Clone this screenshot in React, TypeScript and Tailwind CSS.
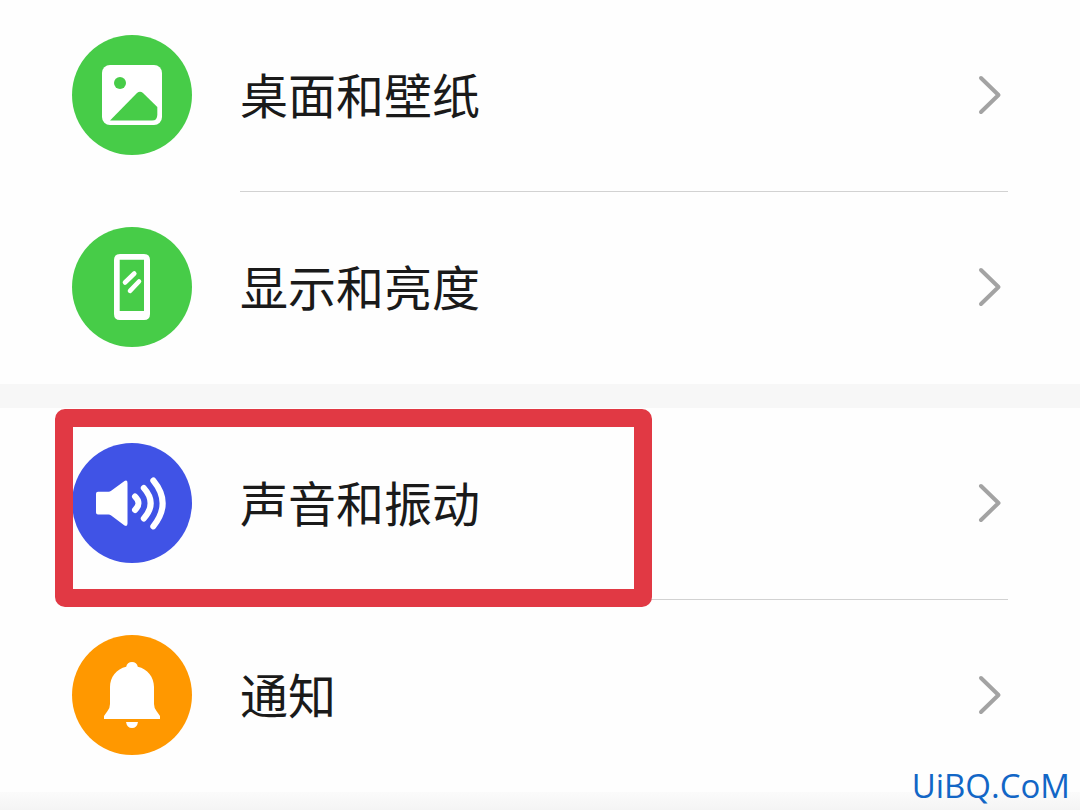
import type { ReactNode } from "react";

function WallpaperIcon() {
  return (
    <svg viewBox="0 0 120 120" className="w-full h-full" aria-hidden="true">
      <rect x="30" y="30" width="60" height="60" rx="8" fill="#fff" />
      <circle cx="48" cy="48" r="6" fill="#47cc48" />
      <path d="M38 85.5 L65 58 Q68 55.300 71 58 L85.300 72 V80 Q85.300 85.500 80 85.500 Z" fill="#47cc48" />
    </svg>
  );
}

function DisplayIcon() {
  return (
    <svg viewBox="0 0 120 120" className="w-full h-full" aria-hidden="true">
      <path
        fillRule="evenodd"
        d="M48 27 H72 Q78 27 78 33 V87 Q78 93 72 93 H48 Q42 93 42 87 V33 Q42 27 48 27 Z M47.700 32.700 V84 H72 V32.700 Z"
        fill="#fff"
      />
      <path d="M53 55.500 L62.300 46.500 M58 63.800 L67 54.500" stroke="#fff" strokeWidth="4.600" strokeLinecap="round" />
    </svg>
  );
}

function SoundIcon() {
  return (
    <svg viewBox="0 0 120 120" className="w-full h-full" aria-hidden="true">
      <path
        d="M26 48.700 H36.500 Q38 48.700 39.200 47.700 L52.500 38 Q55.500 36.600 55.500 40 V80.500 Q55.500 84 52.500 82.500 L39.200 72.500 Q38 71.400 36.500 71.400 H26 Q24 71.400 24 69.400 V50.700 Q24 48.700 26 48.700 Z"
        fill="#fff"
      />
      <g fill="none" stroke="#fff" strokeWidth="6" strokeLinecap="round">
        <path d="M63 53.500 Q70 60.200 63 67" />
        <path d="M71.800 45 Q85.500 60.200 71.800 75.500" />
        <path d="M81.300 37.500 Q100 60.200 81.300 83.300" />
      </g>
    </svg>
  );
}

function BellIcon() {
  return (
    <svg viewBox="0 0 120 120" className="w-full h-full" aria-hidden="true">
      <path
        d="M60 27 C63 27 65.300 28.800 65.800 31.700 C75.500 34 82 42 82 52 V69 Q82 73 84.500 76 L88 81 V84 H32 V81 L35.500 76 Q38 73 38 69 V52 C38 42 44.500 34 54.200 31.700 C54.700 28.800 57 27 60 27 Z"
        fill="#fff"
      />
      <path d="M54 87 H66 Q65 93 60 93 Q55 93 54 87 Z" fill="#fff" />
    </svg>
  );
}

function Chevron() {
  return (
    <svg viewBox="0 0 32 40" className="w-8 h-10 shrink-0" aria-hidden="true">
      <path d="M5 3 L22.500 20 L5 37" fill="none" stroke="#a3a3a3" strokeWidth="4" strokeLinecap="round" strokeLinejoin="round" />
    </svg>
  );
}

type RowProps = {
  label: string;
  icon: ReactNode;
  color: string;
  divider?: boolean;
  highlighted?: boolean;
};

function SettingRow({ label, icon, color, divider, highlighted }: RowProps) {
  return (
    <li className="relative">
      <a href="#" className="flex h-48 gap-12 px-[72px]">
        <span className="flex items-center pb-0.5">
          <span className={`block size-[120px] rounded-full ${color}`}>{icon}</span>
        </span>
        <span className={`flex flex-1 items-center justify-between ${divider ? "border-b border-[#d2d2d2] pb-px" : "pb-0.5"}`}>
          <span className="pb-1 text-[48px] leading-[72px] text-[#1a1a1a]">{label}</span>
          <Chevron />
        </span>
      </a>
      {highlighted && (
        <span className="pointer-events-none absolute left-[55px] top-px h-[198px] w-[597px] rounded-[10px] border-[18px] border-[#e13944] z-10" />
      )}
    </li>
  );
}

export default function App() {
  return (
    <main className="relative flex min-h-screen flex-col bg-[#fefefe] font-['Noto_Sans_CJK_SC',sans-serif]">
      <ul>
        <SettingRow label="桌面和壁纸" icon={<WallpaperIcon />} color="bg-[#47cc48]" divider />
        <SettingRow label="显示和亮度" icon={<DisplayIcon />} color="bg-[#47cc48]" />
      </ul>

      <div className="h-6 bg-[#f7f7f7]" />

      <ul>
        <SettingRow label="声音和振动" icon={<SoundIcon />} color="bg-[#4053e6]" divider highlighted />
        <SettingRow label="通知" icon={<BellIcon />} color="bg-[#ff9800]" />
      </ul>

      <div className="flex-1 bg-linear-to-b from-[#fbfbfb] to-[#f4f4f4]" />

      {/* Site mark */}
      <p className="absolute bottom-1 right-2.5 font-['Open_Sans',sans-serif] text-[33px] leading-10 font-medium text-[#1266c6]">
        UiBQ.CoM
      </p>
    </main>
  );
}
